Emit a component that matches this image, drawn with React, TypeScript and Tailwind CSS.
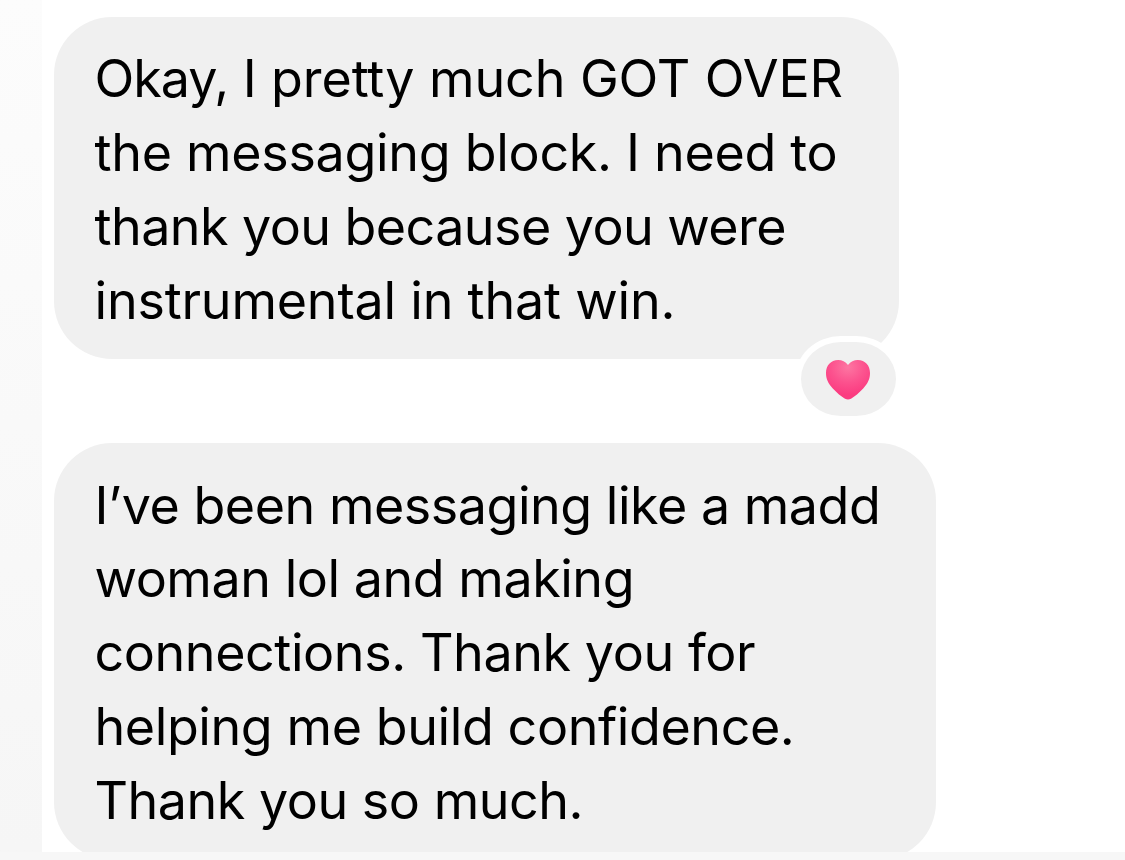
type Line = { lead?: string; text: string; tracking: string }
type Message = { id: number; lines: Line[]; bubble: string; liked?: boolean }

const MESSAGES: Message[] = [
  {
    id: 1,
    bubble: 'w-[845px] h-[342px] rounded-[58px]',
    liked: true,
    lines: [
      { lead: 'Okay,', text: ' I pretty much GOT OVER', tracking: 'tracking-[-0.09px]' },
      { text: 'the messaging block. I need to', tracking: 'tracking-[-0.3px]' },
      { text: 'thank you because you were', tracking: 'tracking-[-0.56px]' },
      { text: 'instrumental in that win.', tracking: 'tracking-[-0.2px]' },
    ],
  },
  {
    id: 2,
    bubble: 'w-[882px] h-[417px] rounded-[58px]',
    lines: [
      { text: 'I’ve been messaging like a madd', tracking: 'tracking-[-0.48px]' },
      { text: 'woman lol and making', tracking: 'tracking-[-0.46px]' },
      { text: 'connections. Thank you for', tracking: 'tracking-[-0.42px]' },
      { text: 'helping me build confidence.', tracking: 'tracking-[-0.41px]' },
      { text: 'Thank you so much.', tracking: 'tracking-[-0.48px]' },
    ],
  },
]

function Heart() {
  return (
    <svg width="46" height="40" viewBox="0 0 46 40" className="mt-[18px]">
      <defs>
        <radialGradient id="heart" cx="50%" cy="18%" r="70%">
          <stop offset="0%" stopColor="#fd76a2" />
          <stop offset="55%" stopColor="#fc528e" />
          <stop offset="100%" stopColor="#fb3b80" />
        </radialGradient>
      </defs>
      <path
        fill="url(#heart)"
        d="M23 5C20.500 1.600 17 0 13.200 0C5.800 0 1 5.500 1 13C1 19 3.200 23.500 7.800 28.400C11.800 32.600 16.300 36.500 20 38.700Q23 40.300 26 38.700C29.700 36.500 34.200 32.600 38.200 28.400C42.800 23.500 45 19 45 13C45 5.500 40.200 0 32.800 0C29 0 25.500 1.600 23 5Z"
      />
    </svg>
  )
}

export default function App() {
  return (
    <div className="flex h-[860px] w-[1125px] flex-col overflow-hidden bg-[#f7f7f7] font-['Inter','Liberation_Sans',sans-serif] text-black">
      <div className="flex h-[852px]">
        <aside className="w-[42px] shrink-0 bg-linear-to-b from-[#fcfcfc] to-[#f6f6f6]" />
        <main className="h-full flex-1 overflow-hidden bg-white pl-[11.5px] pt-[16.5px]">
          <div className="flex flex-col gap-[84.5px]">
            {MESSAGES.map((m) => (
              <div key={m.id} className={`relative shrink-0 bg-[#f0f0f0] pl-[41px] pt-[25.5px] ${m.bubble}`}>
                {m.lines.map((line) => (
                  <p key={line.text} className="h-[73.9px] whitespace-nowrap text-[52px] leading-[74px]">
                    {line.lead && <span className="tracking-[-1px]">{line.lead}</span>}
                    <span className={line.tracking}>{line.text}</span>
                  </p>
                ))}
                {/* Reaction pill, cut out of the bubble by a white ring */}
                {m.liked && (
                  <div className="absolute left-[741.5px] top-[319px] h-[80.500px] w-[106.500px] overflow-hidden">
                    <div className="flex h-[86px] items-start justify-center rounded-[46px/43px] border-[6.5px] border-white bg-[#f0f0f0]">
                      <Heart />
                    </div>
                  </div>
                )}
              </div>
            ))}
          </div>
        </main>
      </div>
    </div>
  )
}
